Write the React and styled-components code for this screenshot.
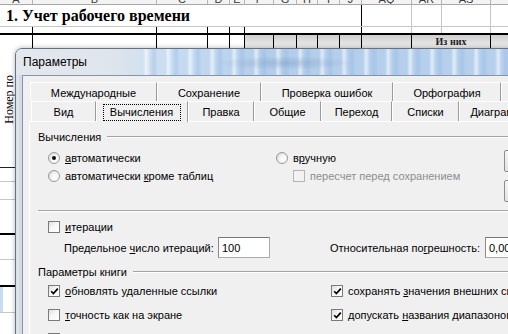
import React from 'react';
import styled, { createGlobalStyle } from 'styled-components';

const GlobalStyle = createGlobalStyle`
  html, body {
    margin: 0;
    padding: 0;
    background: #fff;
  }
  body {
    font-family: "Liberation Sans", Arial, sans-serif;
  }
`;

// sheet column widths, left to right
const cols = [33, 124, 51, 22, 15, 29, 23, 21, 22, 22, 50, 30, 49, 60];
const colTemplate = cols.map(w => `${w}px`).join(' ');
const letters = ['A', 'B', 'C', 'D', 'E', 'F', 'G', 'H', 'I', 'J', 'AQ', 'AR', 'AS', 'AT'];

const Screen = styled.div`
  position: relative;
  width: 508px;
  height: 334px;
  overflow: hidden;
  background: #fff;
`;

/* ---------- spreadsheet behind the dialog ---------- */

const Sheet = styled.div`
  display: flex;
  flex-direction: column;
  margin-top: -13px;
`;

const SheetRow = styled.div`
  display: grid;
  grid-template-columns: ${colTemplate};
  height: ${p => p.$h}px;
  border-bottom: ${p => p.$bottom || 'none'};
`;

const HeadCell = styled.div`
  background: #f3f3f3;
  border-right: 1px solid #b4b4b4;
  border-bottom: 1px solid #a8a8a8;
  font: 11px "Liberation Sans", Arial, sans-serif;
  color: #3a3a3a;
  text-align: center;
  line-height: 24px;
  overflow: hidden;
`;

const Cell = styled.div`
  position: relative;
  grid-column: span ${p => p.$span || 1};
  border-right: ${p =>
    p.$line === 'black' ? '1px solid #000' : p.$line === 'gray' ? '1px solid #c6c6c6' : '1px solid transparent'};
  background: ${p => (p.$fill ? 'linear-gradient(180deg, #cfcfcf 0, #e4e4e4 60%, #efefef 100%)' : 'transparent')};
  white-space: nowrap;
`;

const Title = styled.div`
  position: absolute;
  left: 6px;
  top: 2px;
  font: bold 16px "Liberation Serif", "Times New Roman", serif;
  color: #000;
`;

const SubHead = styled.div`
  font: bold 10px "Liberation Serif", "Times New Roman", serif;
  color: #222;
  text-align: center;
  line-height: 14px;
`;

const LeftColumn = styled.div`
  width: 33px;
  display: flex;
  flex-direction: column;
`;

const LeftCell = styled.div`
  height: ${p => p.$h}px;
  border-bottom: ${p => (p.$thick ? '2px solid #000' : p.$dark ? '1px solid #222' : '1px solid #c6c6c6')};
  background: ${p => (p.$blue ? 'linear-gradient(90deg, #c6dcf3 0 3px, transparent 3px)' : 'transparent')};
  box-sizing: border-box;
  display: flex;
  align-items: center;
  justify-content: flex-start;
`;

const Vertical = styled.span`
  writing-mode: vertical-rl;
  transform: rotate(180deg);
  font: 12px "Liberation Serif", "Times New Roman", serif;
  color: #000;
  margin-left: 2px;
  margin-bottom: 16px;
`;

/* ---------- dialog window ---------- */

const Dialog = styled.div`
  position: absolute;
  left: 15px;
  top: 48px;
  width: 560px;
  height: 400px;
  box-sizing: border-box;
  border: 1px solid #66727f;
  border-radius: 7px 7px 0 0;
  background: linear-gradient(90deg, #d9dee4 0, #e2e7ec 2px, #cdd8e5 4px, #d8dee5 6px);
  box-shadow: 0 0 5px rgba(0, 0, 0, 0.3);
  display: flex;
  flex-direction: column;
  overflow: hidden;
`;

const TitleBar = styled.div`
  flex: none;
  position: relative;
  height: 26px;
  display: flex;
  align-items: center;
  padding-left: 7px;
  background: linear-gradient(90deg, #e3e8ee 0, #dfe5ec 95px, #c9ddf2 150px, #b3ceeb 250px, #b7d1ed 100%);
  &::after {
    content: '';
    position: absolute;
    left: 120px;
    right: 0;
    top: 0;
    bottom: 0;
    background:
      radial-gradient(ellipse 70px 7px at 150px 14px, rgba(110, 140, 180, 0.35), transparent),
      repeating-linear-gradient(90deg, rgba(255, 255, 255, 0) 0 7px, rgba(255, 255, 255, 0.6) 10px, rgba(255, 255, 255, 0) 14px, rgba(140, 178, 222, 0.35) 18px, rgba(255, 255, 255, 0) 22px);
  }
`;

const TitleText = styled.span`
  position: relative;
  z-index: 1;
  font: 12px "Liberation Sans", Arial, sans-serif;
  color: #000;
`;

const Body = styled.div`
  flex: 1;
  margin-left: 6px;
  background: #f0f0f0;
  border-top: 1px solid #8694a5;
  border-left: 1px solid #8694a5;
  padding: 6px 0 0 6px;
  font: 11px "Liberation Sans", Arial, sans-serif;
  color: #000;
`;

const TabRow = styled.div`
  display: flex;
  height: ${p => p.$h}px;
  margin-left: ${p => p.$indent}px;
  position: relative;
  z-index: ${p => (p.$front ? 2 : 1)};
`;

const Tab = styled.div`
  flex: none;
  box-sizing: border-box;
  width: ${p => p.$w}px;
  height: ${p => (p.$active ? 'calc(100% + 1px)' : '100%')};
  border-top: 1px solid #fff;
  border-left: 1px solid #fff;
  border-right: 1px solid #9a9a9a;
  background: #f0f0f0;
  display: flex;
  align-items: center;
  justify-content: center;
  padding-top: 1px;
  white-space: nowrap;
`;

const Focus = styled.span`
  border: 1px dotted #000;
  padding: 1px 7px 1px 6px;
  line-height: 13px;
`;

const Panel = styled.div`
  border-top: 1px solid #fff;
  border-left: 1px solid #fff;
  padding-left: 8px;
  height: 260px;
`;

const GroupHead = styled.div`
  display: flex;
  align-items: center;
  gap: 6px;
  height: 14px;
  margin-top: ${p => p.$mt}px;
`;

const Rule = styled.div`
  flex: 1;
  border-top: 1px solid #a3a3a3;
  border-bottom: 1px solid #fff;
`;

const CalcSection = styled.div`
  display: grid;
  grid-template-columns: 228px 228px 40px;
  height: 61px;
  margin-top: 5px;
  padding-left: 10px;
`;

const Stack = styled.div`
  display: flex;
  flex-direction: column;
`;

const Line = styled.div`
  display: flex;
  align-items: center;
  gap: 3px;
  height: 18px;
  padding-left: ${p => p.$indent || 0}px;
  color: ${p => (p.$disabled ? '#8d8d8d' : '#000')};
  white-space: nowrap;
`;

const RadioDot = styled.span`
  flex: none;
  width: 12px;
  height: 12px;
  box-sizing: border-box;
  border-radius: 50%;
  border: 1px solid #9a9a9a;
  background: radial-gradient(circle at 65% 65%, #fff 0, #f4f4f4 45%, #c9c9c9 100%);
  display: flex;
  align-items: center;
  justify-content: center;
  margin-right: 2px;
  &::after {
    content: '';
    width: 4px;
    height: 4px;
    border-radius: 50%;
    background: ${p => (p.$on ? '#111' : 'transparent')};
  }
`;

const Box = styled.span`
  flex: none;
  width: 12px;
  height: 12px;
  box-sizing: border-box;
  border: 1px solid ${p => (p.$disabled ? '#b5b5b5' : '#7a7a7a')};
  background: ${p => (p.$disabled ? '#f2f2f2' : 'linear-gradient(135deg, #dedede 0, #f7f7f7 45%, #fff 100%)')};
  display: flex;
  align-items: center;
  justify-content: center;
  margin-right: 2px;
`;

const SideButton = styled.div`
  width: 80px;
  height: 22px;
  box-sizing: border-box;
  border: 1px solid #8d8d8d;
  border-radius: 2px;
  background: linear-gradient(180deg, #f6f6f6, #e2e2e2);
  margin-top: ${p => p.$mt}px;
`;

const IterSection = styled.div`
  padding-left: 10px;
  margin-top: 6px;
`;

const LimitRow = styled.div`
  display: grid;
  grid-template-columns: 154px 52px 60px 155px 60px;
  align-items: center;
  height: 21px;
  margin-top: 1px;
  padding-left: 26px;
  white-space: nowrap;
`;

const Field = styled.div`
  height: 21px;
  box-sizing: border-box;
  border: 1px solid #ababab;
  border-top-color: #777;
  border-left-color: #8a8a8a;
  background: #fff;
  padding-left: 3px;
  display: flex;
  align-items: center;
`;

const BookGrid = styled.div`
  display: grid;
  grid-template-columns: 283px auto;
  grid-auto-rows: 24px;
  margin-top: 3px;
  padding-left: 10px;
`;

const Tick = () => (
  <svg width="9" height="9" viewBox="0 0 9 9">
    <path d="M1.2 4.2 L3.4 6.6 L7.8 1.6" fill="none" stroke="#000" strokeWidth="1.7" />
  </svg>
);

const Radio = ({ on, children }) => (
  <Line>
    <RadioDot $on={on} />
    <span>{children}</span>
  </Line>
);

const Check = ({ on, disabled, indent, children }) => (
  <Line $indent={indent} $disabled={disabled}>
    <Box $disabled={disabled}>{on && <Tick />}</Box>
    <span>{children}</span>
  </Line>
);

const topTabs = [
  ['Международные', 127],
  ['Сохранение', 104],
  ['Проверка ошибок', 132],
  ['Орфография', 108],
  ['', 70]
];

const frontTabs = [
  ['Вид', 65],
  ['Вычисления', 92],
  ['Правка', 66],
  ['Общие', 67],
  ['Переход', 71],
  ['Списки', 67],
  ['Диаграмма', 80]
];

const titleLines = [null, null, null, null, null, null, null, null, null, 'black', 'gray', 'gray', 'gray', 'gray'];
const gapLines = ['black', 'black', 'black', 'black', 'black', null, null, null, null, 'black', 'gray', 'gray', 'gray', 'gray'];
// last header row: column 11 is merged with column 12 under "Из них"
const headCells = [
  { line: 'black' },
  { line: 'black' },
  { line: 'black' },
  { line: 'black' },
  { line: 'black' },
  { line: 'black', fill: true },
  { line: 'black', fill: true },
  { line: 'black', fill: true },
  { line: 'black', fill: true },
  { line: 'black', fill: true },
  { line: 'black', fill: true },
  { line: 'black', fill: true, span: 2, text: 'Из них' },
  { line: 'black', fill: true }
];

export default function App() {
  return (
    <Screen>
      <GlobalStyle />
      <Sheet>
        <SheetRow $h={18}>
          {letters.map(l => (
            <HeadCell key={l}>{l}</HeadCell>
          ))}
        </SheetRow>
        <SheetRow $h={21} $bottom="1px solid #c6c6c6">
          {titleLines.map((line, i) => (
            <Cell key={i} $line={line}>
              {i === 0 && <Title>1. Учет рабочего времени</Title>}
            </Cell>
          ))}
        </SheetRow>
        <SheetRow $h={6} $bottom="2px solid #000">
          {gapLines.map((line, i) => (
            <Cell key={i} $line={line} />
          ))}
        </SheetRow>
        <SheetRow $h={13}>
          {headCells.map((c, i) => (
            <Cell key={i} $line={c.line} $fill={c.fill} $span={c.span}>
              {c.text && <SubHead>{c.text}</SubHead>}
            </Cell>
          ))}
        </SheetRow>
        <LeftColumn>
          <LeftCell $h={120} $dark>
            <Vertical>Номер по</Vertical>
          </LeftCell>
          <LeftCell $h={14} />
          <LeftCell $h={18} />
          <LeftCell $h={35} $thick />
          <LeftCell $h={25} />
          <LeftCell $h={27} $thick />
          <LeftCell $h={26} $blue />
        </LeftColumn>
      </Sheet>

      <Dialog>
        <TitleBar>
          <TitleText>Параметры</TitleText>
        </TitleBar>
        <Body>
          <TabRow $h={19} $indent={1}>
            {topTabs.map(([label, w], i) => (
              <Tab key={i} $w={w}>
                {label}
              </Tab>
            ))}
          </TabRow>
          <TabRow $h={20} $indent={2} $front>
            {frontTabs.map(([label, w]) => (
              <Tab key={label} $w={w} $active={label === 'Вычисления'}>
                {label === 'Вычисления' ? <Focus>{label}</Focus> : label}
              </Tab>
            ))}
          </TabRow>
          <Panel>
            <GroupHead $mt={8}>
              <span>Вычисления</span>
              <Rule />
            </GroupHead>
            <CalcSection>
              <Stack>
                <Radio on>
                  <u>а</u>втоматически
                </Radio>
                <Radio>
                  автоматически <u>к</u>роме таблиц
                </Radio>
              </Stack>
              <Stack>
                <Radio>
                  в<u>р</u>учную
                </Radio>
                <Check disabled indent={17}>
                  пересчет перед сохранением
                </Check>
              </Stack>
              <Stack>
                <SideButton $mt={1} />
                <SideButton $mt={8} />
              </Stack>
            </CalcSection>
            <Rule />
            <IterSection>
              <Check>
                <u>и</u>терации
              </Check>
            </IterSection>
            <LimitRow>
              <span>
                Предельное <u>ч</u>исло итераций:
              </span>
              <Field>100</Field>
              <span />
              <span>
                Относительная по<u>г</u>решность:
              </span>
              <Field>0,001</Field>
            </LimitRow>
            <GroupHead $mt={7}>
              <span>Параметры книги</span>
              <Rule />
            </GroupHead>
            <BookGrid>
              <Check on>
                <u>о</u>бновлять удаленные ссылки
              </Check>
              <Check on>
                сохранять <u>з</u>начения внешних связей
              </Check>
              <Check>
                <u>т</u>очность как на экране
              </Check>
              <Check on>
                допускать <u>н</u>азвания диапазонов
              </Check>
              <Check>система дат 1904</Check>
            </BookGrid>
          </Panel>
        </Body>
      </Dialog>
    </Screen>
  );
}
